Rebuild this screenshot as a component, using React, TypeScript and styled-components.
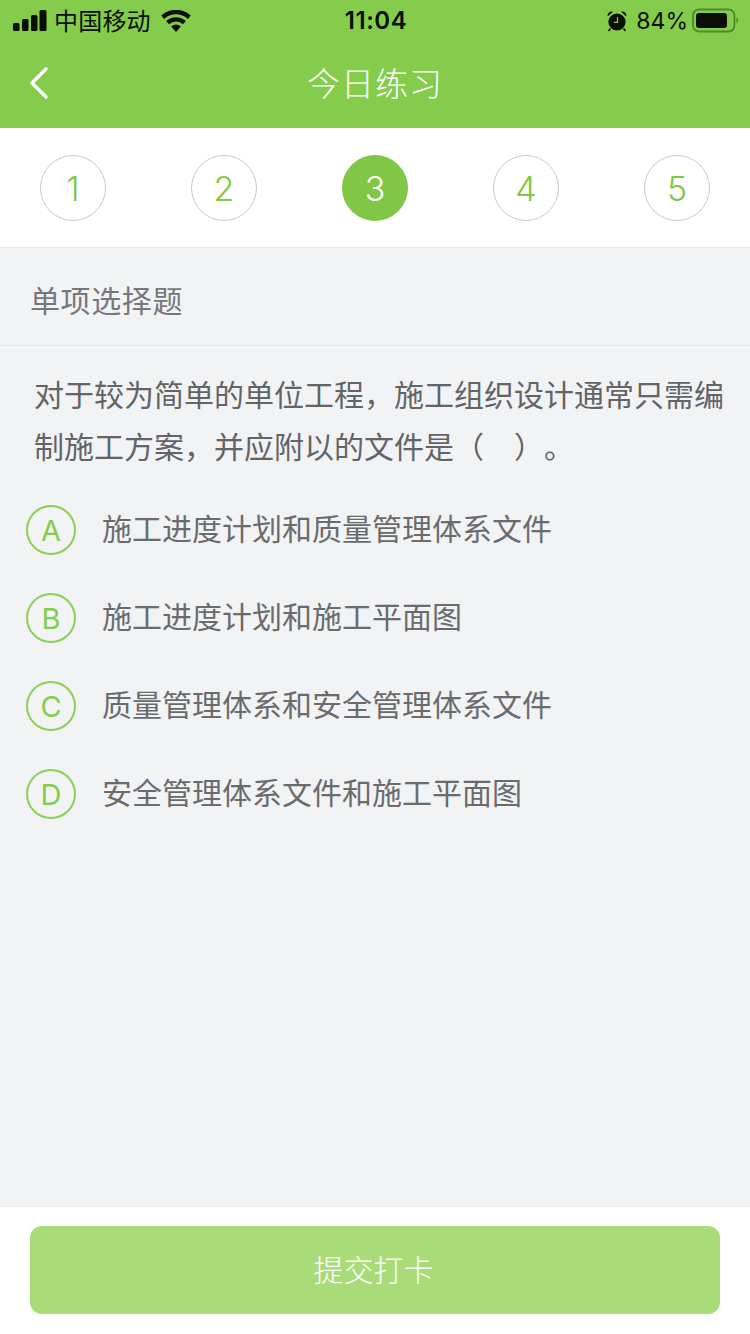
import React from "react";
import styled, { createGlobalStyle } from "styled-components";

const Global = createGlobalStyle`
  html, body { margin: 0; padding: 0; background: #f2f3f5; }
  body { font-family: "Liberation Sans", "Noto Sans CJK SC", sans-serif; }
`;
const Page = styled.div`
  width: 750px; height: 1334px; display: flex; flex-direction: column; overflow: hidden; background: #f2f3f5;
`;
const Header = styled.header`
  background: #86cc4c; height: 128px; display: flex; flex-direction: column; flex: none;
`;
const StatusBar = styled.div`
  height: 40px; display: grid; grid-template-columns: 1fr auto 1fr; align-items: center; color: #0a0f05; padding: 0 11px 0 13px;
`;
const StatusLeft = styled.div`display: flex; align-items: center; gap: 9px; font-size: 24px;`;
const Carrier = styled.span`margin: -2px 0 0 -2px; line-height: 40px; font-family: "Noto Sans CJK SC", sans-serif; font-weight: 400; letter-spacing: 0.2px;`;
const Clock = styled.div`font-size: 24px; line-height: 40px; font-family: "Inter", sans-serif; font-weight: 600; letter-spacing: 0.5px; padding-top: 1px;`;
const StatusRight = styled.div`display: flex; align-items: center; justify-content: flex-end; gap: 9px; font-size: 23px;`;
const Percent = styled.span`font-family: "Inter", sans-serif; font-weight: 400; margin-right: -5px;`;
const NavBar = styled.div`
  flex: 1; display: flex; align-items: center; justify-content: center; position: relative; padding-bottom: 5px;
`;
const Back = styled.svg`position: absolute; left: 28px; top: 26px;`;
const Title = styled.h1`
  margin: 0; font-size: 33px; font-weight: 300; color: #fff; font-family: "Noto Sans CJK SC", sans-serif; line-height: 44px; letter-spacing: 1px;
`;
const Steps = styled.nav`
  background: #fff; height: 120px; box-sizing: border-box; padding: 27px 40px 0; display: flex; justify-content: space-between; align-items: flex-start; flex: none; border-bottom: 1px solid #e8e9ea;
`;
const Step = styled.div<{ $active?: boolean }>`
  width: 66px; height: 66px; box-sizing: border-box; border-radius: 50%;
  border: 1px solid ${p => (p.$active ? "#7fc744" : "#c9c9c9")};
  background: ${p => (p.$active ? "#7fc744" : "#fff")};
  color: ${p => (p.$active ? "#fff" : "#7fc744")};
  display: flex; align-items: center; justify-content: center; font-size: 34px;
  font-family: "Inter", sans-serif; font-weight: 350;
`;
const SectionHead = styled.div`
  height: 98px; box-sizing: border-box; padding: 4px 0 0 30px; display: flex; align-items: center; font-size: 30px; letter-spacing: 0.6px; color: #76777a; border-bottom: 1px solid #e6e7e9; flex: none; font-weight: 400; font-family: "Noto Sans CJK SC", sans-serif;
`;
const Body = styled.main`flex: 1; min-height: 0;`;
const Question = styled.p`
  margin: 0; padding: 21px 20px 0 34px; font-size: 30px; line-height: 52px; color: #636466; font-weight: 400; font-family: "Noto Sans CJK SC", sans-serif; text-spacing-trim: space-all;
`;
const Options = styled.ul`list-style: none; margin: 34px 0 0; padding: 0 0 0 26px; display: flex; flex-direction: column; gap: 38px;`;
const Option = styled.li`display: flex; align-items: center; gap: 26px; height: 50px;`;
const Letter = styled.span`
  width: 50px; height: 50px; box-sizing: border-box; border-radius: 50%; border: 2px solid #8ccf55; color: #86cc4c;
  display: flex; align-items: center; justify-content: center; font-size: 29px; font-family: "Inter", sans-serif; font-weight: 400; flex: none;
`;
const OptionText = styled.span`font-size: 30px; color: #6a6b6d; font-weight: 400; font-family: "Noto Sans CJK SC", sans-serif; padding-bottom: 6px;`;
const Footer = styled.footer`
  height: 128px; flex: none; box-sizing: border-box; background: #fff; border-top: 1px solid #e9eaec; padding: 19px 30px 0;
`;
const Submit = styled.button`
  width: 100%; height: 88px; border: 0; border-radius: 12px; background: #a9dc78; color: #fff; font-size: 30px; font-weight: 300;
  font-family: "Noto Sans CJK SC", sans-serif; padding: 0 3px 4px 0;
`;

const options: [string, string][] = [
  ["A", "施工进度计划和质量管理体系文件"],
  ["B", "施工进度计划和施工平面图"],
  ["C", "质量管理体系和安全管理体系文件"],
  ["D", "安全管理体系文件和施工平面图"],
];

export default function App() {
  return (
    <Page>
      <Global />
      <Header>
        <StatusBar>
          <StatusLeft>
            <svg width="34" height="24" viewBox="0 0 34 24" fill="#0a0f05">
              <rect x="0" y="14" width="6.5" height="8" rx="1.5" />
              <rect x="9" y="10" width="6.5" height="12" rx="1.5" />
              <rect x="18" y="6" width="6.5" height="16" rx="1.5" />
              <rect x="26.5" y="1" width="7" height="21" rx="1.5" />
            </svg>
            <Carrier>中国移动</Carrier>
            <svg width="30" height="24" viewBox="0 0 30 24" fill="#0a0f05" style={{ marginLeft: 1, marginTop: 2 }}>
              <path d="M15 22l-4.8-5.4a6.8 6.8 0 0 1 9.6 0z" />
              <path d="M8 14.2l-2.9-3.2a14.6 14.6 0 0 1 19.8 0l-2.9 3.2a10.4 10.4 0 0 0-14 0z" />
              <path d="M3.2 8.9L0.3 5.6a21.6 21.6 0 0 1 29.4 0l-2.9 3.3a17.4 17.4 0 0 0-23.6 0z" />
            </svg>
          </StatusLeft>
          <Clock>11:04</Clock>
          <StatusRight>
            <svg width="20" height="22" viewBox="0 0 20 22" fill="#0a0f05">
              <circle cx="10" cy="12" r="8.6" />
              <path d="M0.6 6.4 A4.2 4.2 0 0 1 6 1.8z M19.4 6.4 A4.2 4.2 0 0 0 14 1.8z" />
              <path d="M3.5 18.5l-2 2.5M16.5 18.5l2 2.5" stroke="#0a0f05" strokeWidth="1.6" />
              <path d="M10.5 7v5.4H6.8" stroke="#86cc4c" strokeWidth="1.3" fill="none" />
            </svg>
            <Percent>84%</Percent>
            <svg width="47" height="26" viewBox="0 0 47 26">
              <rect x="1" y="1.5" width="41.5" height="22" rx="6" fill="none" stroke="#4f8a2c" strokeWidth="1.8" />
              <rect x="4" y="5" width="31" height="15" rx="3" fill="#0a0f05" />
              <path d="M44.5 9.5v6a3 3 0 0 0 1.6-3 3 3 0 0 0-1.6-3z" fill="#4f8a2c" />
            </svg>
          </StatusRight>
        </StatusBar>
        <NavBar>
          <Back width="22" height="34" viewBox="0 0 22 34" fill="none" stroke="#fff" strokeWidth="3.4" strokeLinecap="round" strokeLinejoin="round">
            <path d="M18 3L4 17l14 14" />
          </Back>
          <Title>今日练习</Title>
        </NavBar>
      </Header>
      <Steps>
        {[1, 2, 3, 4, 5].map(n => (
          <Step key={n} $active={n === 3}>{n}</Step>
        ))}
      </Steps>
      <SectionHead>单项选择题</SectionHead>
      <Body>
        <Question>对于较为简单的单位工程，施工组织设计通常只需编制施工方案，并应附以的文件是（　）。</Question>
        <Options>
          {options.map(([l, t]) => (
            <Option key={l}>
              <Letter>{l}</Letter>
              <OptionText>{t}</OptionText>
            </Option>
          ))}
        </Options>
      </Body>
      <Footer>
        <Submit>提交打卡</Submit>
      </Footer>
    </Page>
  );
}
